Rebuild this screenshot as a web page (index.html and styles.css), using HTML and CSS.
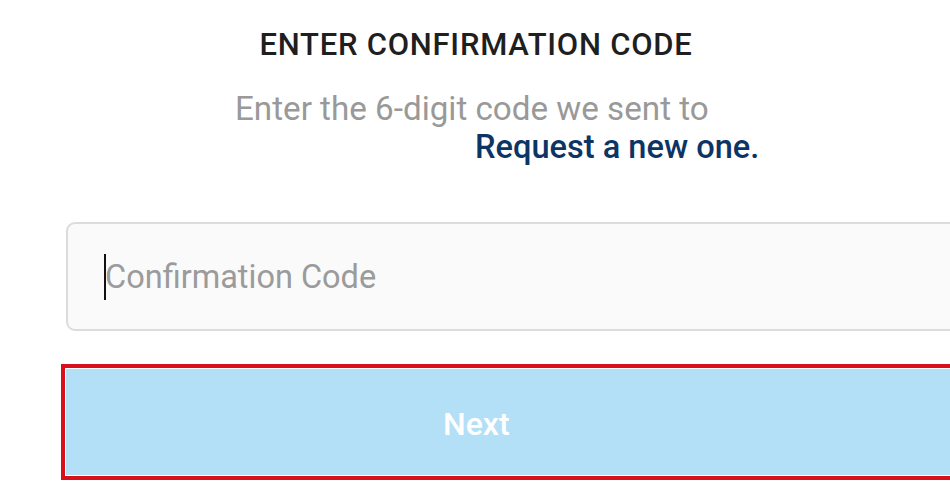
FILE: index.html
```html
<!DOCTYPE html>
<html>
<head>
<meta charset="utf-8">
<link rel="stylesheet" href="styles.css">
</head>
<body>
<div class="page">
  <h1 class="title">ENTER CONFIRMATION CODE</h1>
  <p class="sub">Enter the 6-digit code we sent to</p>
  <p class="link-row"><a class="link">Request a new one.</a></p>
  <div class="field">
    <span class="caret"></span><span class="placeholder">Confirmation Code</span>
  </div>
  <div class="btn-wrap">
    <div class="btn">Next</div>
  </div>
</div>
</body>
</html>
```
FILE: styles.css
```css
html, body {
  margin: 0;
  padding: 0;
  background: #ffffff;
  overflow: hidden;
  width: 950px;
  height: 500px;
}
.page {
  font-family: Roboto, "Liberation Sans", sans-serif;
  display: flex;
  flex-direction: column;
  padding-top: 28px;
}
.title {
  margin: 0;
  font-size: 31px;
  font-weight: 500;
  letter-spacing: 0.75px;
  color: #1f1f1f;
  text-align: center;
  line-height: 34px;
  padding-left: 2px;
}
.sub {
  margin: 30px 0 0 235px;
  font-size: 33.2px;
  color: #999999;
  line-height: 34px;
}
.link-row {
  margin: 4px 0 0 475px;
  font-size: 32.6px;
  line-height: 34px;
}
.link {
  color: #0c3566;
  font-weight: 500;
}
.field {
  margin: 58px 0 0 66px;
  width: 940px;
  height: 109px;
  border: 2px solid #dcdcdc;
  border-radius: 9px;
  background: #fafafa;
  display: flex;
  align-items: center;
  padding-left: 36px;
  box-sizing: border-box;
}
.caret {
  width: 2px;
  height: 46px;
  background: #111;
}
.placeholder {
  font-size: 32.5px;
  color: #9b9b9b;
  margin-left: -1px;
}
.btn-wrap {
  margin: 33px 0 0 61px;
  width: 940px;
  height: 116px;
  border: 4px solid #d8101c;
  box-sizing: border-box;
  padding: 1px;
  background: #ffffff;
}
.btn {
  height: 100%;
  background: #b3dff7;
  color: #ffffff;
  font-size: 32px;
  font-weight: 500;
  display: flex;
  align-items: center;
  padding-left: 377px;
  padding-top: 4px;
  box-sizing: border-box;
}
```
